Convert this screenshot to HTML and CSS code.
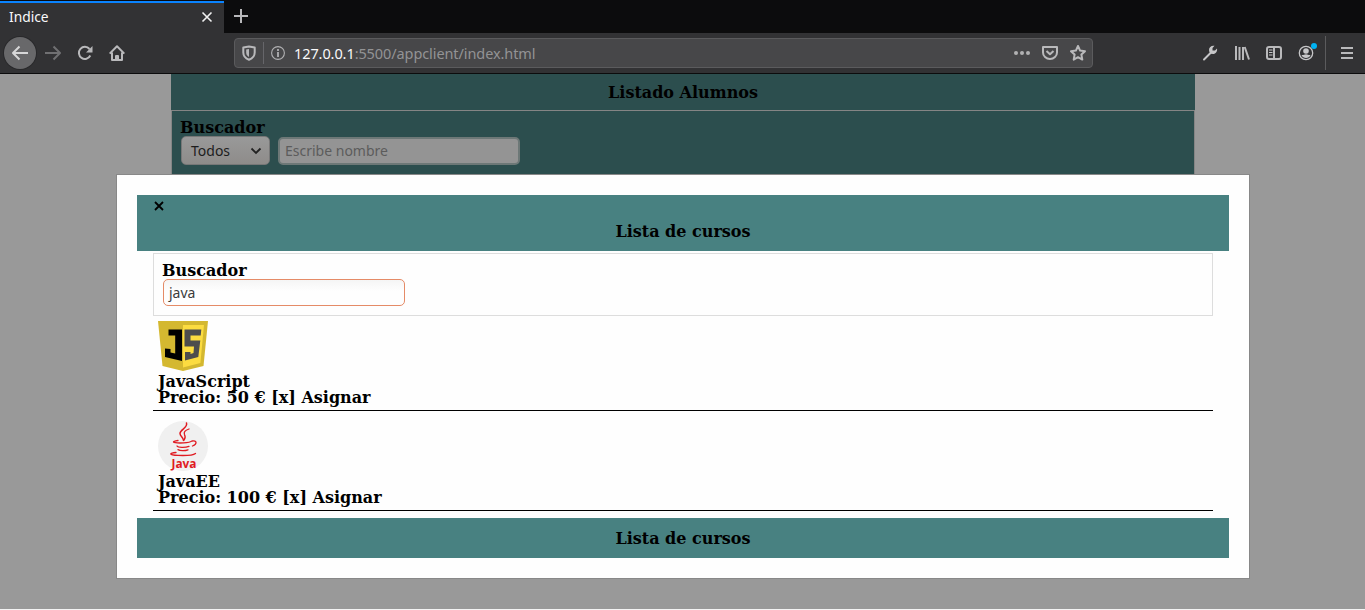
FILE: index.html
```html
<!DOCTYPE html>
<html lang="es">
<head>
<meta charset="utf-8">
<title>Indice</title>
<link rel="stylesheet" href="styles.css">
</head>
<body>
<div class="browser">
  <div class="tabs">
    <div class="tab">
      <span class="tab-title">Indice</span>
      <svg class="tab-close" width="12" height="12" viewBox="0 0 12 12"><path d="M1.500 1.500l9 9M10.500 1.500l-9 9" stroke="#f0f0f0" stroke-width="1.600" fill="none"/></svg>
    </div>
    <svg class="tab-new" width="16" height="16" viewBox="0 0 16 16"><path d="M8 1v14M1 8h14" stroke="#b8b8ba" stroke-width="2"/></svg>
  </div>
  <div class="toolbar">
    <div class="nav">
      <span class="back"><svg width="18" height="16" viewBox="0 0 18 16"><path d="M17 8H2M8.500 1.500L2 8l6.500 6.500" class="line"/></svg></span>
      <svg class="forward" width="16" height="16" viewBox="0 0 16 16"><path d="M0 8h15M8.500 1.500L15 8l-6.500 6.500" class="line"/></svg>
      <svg class="reload" width="16" height="16" viewBox="0 0 16 16"><path d="M13.300 10.500A6 6 0 1 1 12.500 4" class="line"/><path d="M15.500 1v6.500H9z" fill="#b7b7b9"/></svg>
      <svg class="home" width="16" height="16" viewBox="0 0 16 16"><path d="M.7 8.600L8 1.300l7.300 7.300M3 7.500V15h10V7.500" class="line"/><path d="M7 15v-4h2v4" class="line"/></svg>
    </div>
    <div class="urlbar">
      <svg class="shield" width="14" height="16" viewBox="0 0 14 16"><path d="M7 1.500L12.700 2.500v5c0 3.500-2.300 6-5.700 7.300C3.600 13.500 1.300 11 1.300 7.500v-5z" class="line"/><path d="M7 4v8C5 10.800 4.200 9.500 4.200 7.500V4.500z" fill="#b7b7b9"/></svg>
      <span class="url-divider"></span>
      <svg class="info" width="14" height="14" viewBox="0 0 14 14"><circle cx="7" cy="7" r="6.400" fill="none" stroke="#b1b1b3" stroke-width="1.100"/><path d="M7 3v2M7 6v5" stroke="#b1b1b3" stroke-width="1.800"/></svg>
      <span class="url"><b>127.0.0.1</b>:5500/appclient/index.html</span>
      <svg class="dots" width="16" height="6" viewBox="0 0 16 6"><g fill="#b1b1b3"><circle cx="2" cy="3" r="2"/><circle cx="8" cy="3" r="2"/><circle cx="14" cy="3" r="2"/></g></svg>
      <svg class="pocket" width="16" height="14" viewBox="0 0 16 14"><path d="M1 1h14v5.500a7 6.500 0 0 1-14 0z" class="line"/><path d="M4.500 5L8 8.300 11.500 5" class="line"/></svg>
      <svg class="star" width="16" height="16" viewBox="0 0 16 16"><path d="M8 1l2.100 4.600 4.900.6-3.600 3.400.9 5L8 12.200l-4.300 2.400.9-5L1 6.200l4.900-.6z" class="line"/></svg>
    </div>
    <div class="tools">
      <svg width="16" height="16" viewBox="0 0 16 16"><path d="M2 14.500L9 7.500" stroke="#c6c6c8" stroke-width="2" stroke-linecap="round"/><path d="M12.500.8L10.500 3v2.500H13l2-2c.6 2.800-1.200 5.500-4 5.500-2.200 0-4-1.500-4-4 0-2.800 2.500-4.800 5.500-4.200z" fill="#c6c6c8"/></svg>
      <svg width="16" height="16" viewBox="0 0 16 16"><path d="M2 1v14M5.500 2v13M9 2v13M10.700 2l4.300 12.500" class="line"/></svg>
      <svg width="16" height="14" viewBox="0 0 16 14"><rect x="1" y="1" width="14" height="12" rx="2" class="line"/><path d="M8 1v12" class="line"/><path d="M3 4h3.500M3 6.500h3.500M3 9h3.500" stroke="#c6c6c8"/></svg>
      <span class="account">
        <svg width="16" height="16" viewBox="0 0 16 16"><circle cx="8" cy="8" r="6.700" fill="none" stroke="#c6c6c8" stroke-width="1.300"/><circle cx="8" cy="6" r="2.800" fill="#c6c6c8"/><path d="M3.500 10c2 .4 2.500-.8 4.500-.8s2.500 1.200 4.500.8C11.500 12.300 10 13 8 13s-3.500-.7-4.500-3z" fill="#c6c6c8"/></svg>
        <i class="account-dot"></i>
      </span>
      <span class="tools-divider"></span>
      <svg class="menu" width="12" height="12" viewBox="0 0 12 12"><path d="M0 1h12M0 6h12M0 11h12" class="line"/></svg>
    </div>
  </div>
</div>
<main class="page">
  <section class="students">
    <h1 class="title">Listado Alumnos</h1>
    <div class="filters">
      <div class="label">Buscador</div>
      <div class="controls">
        <div class="select"><span>Todos</span><svg width="12" height="8" viewBox="0 0 12 8"><path d="M1.500 1.500L6 6l4.500-4.500" fill="none" stroke="#222" stroke-width="1.800"/></svg></div>
        <div class="input dim">Escribe nombre</div>
      </div>
    </div>
  </section>
  <section class="modal">
    <header class="modal-head">
      <svg class="close" width="10" height="10" viewBox="0 0 10 10"><path d="M1 1l8 8M9 1L1 9" stroke="#000" stroke-width="1.800"/></svg>
      <h2 class="title modal-title">Lista de cursos</h2>
    </header>
    <div class="modal-body">
      <div class="search">
        <div class="label">Buscador</div>
        <div class="input focused">java</div>
      </div>
      <article class="course">
        <svg class="logo" width="50" height="50" viewBox="0 0 50 50"><path d="M0 0h50l-4.500 45L25 50 4.500 45z" fill="#d4b830"/><path d="M25 4h21l-3.600 38L25 46.500z" fill="#fcdc40"/><path d="M10.500 8.500H24V40L7 36v-8.500l5.500.5v3.500l4.700 1V14.500h-6.700z" fill="#000"/><path d="M43.300 8.500l-.6 6H32.500v5h9.800L40.300 36 27 39.500V31h5.500v2l3-.9.5-6.600h-9.500v-17z" fill="#4d4d4d"/></svg>
        <div class="course-line">JavaScript</div>
        <div class="course-line">Precio: 50 € [x] Asignar</div>
      </article>
      <article class="course">
        <svg class="logo" width="50" height="50" viewBox="0 0 50 50"><circle cx="25" cy="25" r="25" fill="#f0f0f0"/><g fill="none" stroke="#e01b22" stroke-linecap="round"><path d="M28.500 2c1.500 5-6.500 6.500-6.500 10.500 0 3 3.500 3.500 3.500 7" stroke-width="1.500"/><path d="M31 8c-4 1.500-5.500 3-4.500 5.500 1 2 1.500 3.200-.5 5.500" stroke-width="1.300"/><path d="M20 19.500c-7 1-5.500 2.300 2 2.500 4 0 8-.2 11-1.500M34 20c5-1 5.500 3 .5 5M19 25c1 1.600 8 1.800 12 .4M20 28.600c2 1.300 7 1.400 10 .2M18 31.500c-7 .5-7.500 2.500 2 2.900 7 .3 15 0 17.500-2" stroke-width="1.300"/></g><text x="26" y="46.500" text-anchor="middle" textLength="25" lengthAdjust="spacingAndGlyphs" class="java-word">Java</text></svg>
        <div class="course-line">JavaEE</div>
        <div class="course-line">Precio: 100 € [x] Asignar</div>
      </article>
    </div>
    <footer class="modal-foot"><h2 class="title modal-title">Lista de cursos</h2></footer>
  </section>
</main>
</body>
</html>
```
FILE: styles.css
```css
* { box-sizing: border-box; }
body { margin: 0; width: 1365px; height: 610px; overflow: hidden; background: #f4f4f4; font: bold 16px/16px "DejaVu Serif", serif; color: #000; }
svg { display: block; flex: none; }
.line { fill: none; stroke: #b9b9bb; stroke-width: 2; stroke-linejoin: round; }
.browser { height: 74px; font: 15px/20px "Noto Sans", sans-serif; background: #323234; border-bottom: 1px solid #0c0c0d; }
.tabs { display: flex; height: 33px; background: #0c0c0d; }
.tab { display: flex; justify-content: space-between; align-items: center; width: 224px; margin-top: 1px; padding: 0 11px 2px 9px; border-top: 2px solid #0a84ff; background: #323234; color: #f9f9fa; font-size: 13.800px; }
.tab-new { margin: 8px 0 0 9px; }
.toolbar { display: flex; height: 40px; align-items: center; }
.nav { display: flex; align-items: center; width: 234px; padding-left: 4px; }
.back { display: flex; align-items: center; justify-content: center; width: 32px; height: 32px; border-radius: 50%; background: #68686a; box-shadow: 0 0 0 1px #29292b; }
.back .line { stroke: #d7d7d8; }
.forward { margin-left: 9px; }
.forward .line { stroke: #707072; }
.reload { margin-left: 16px; }
.home { margin-left: 16px; }
.urlbar { display: flex; align-items: center; width: 859px; height: 30px; padding-left: 7px; border: 1px solid #5b5b5d; border-radius: 4px; background: #474749; }
.url-divider { width: 1px; height: 22px; margin: 0 7px 0 7px; background: #66666a; }
.url { flex: 1; margin-left: 9px; color: #939395; font-size: 14.500px; letter-spacing: -.09px; white-space: nowrap; }
.url b { color: #f9f9fa; font-weight: 400; }
.pocket { margin-left: 12px; }
.star { margin: 0 6px 0 12px; }
.tools { display: flex; align-items: center; gap: 16px; margin-left: 109px; }
.account { position: relative; }
.account-dot { position: absolute; top: -2px; right: -3px; width: 6px; height: 6px; border-radius: 50%; background: #00b3f4; }
.tools-divider { width: 1px; height: 34px; margin-left: -5px; background: #5b5b5d; }
.menu { margin-left: -1px; }
.page { position: relative; height: 535px; background: #999; }
.students { width: 1024px; margin-left: 171px; background: #2c4e4e; }
.title { margin: 0; font-size: 16px; line-height: 16px; text-align: center; }
.students .title { height: 36px; padding-top: 11px; }
.filters { height: 66px; padding: 9px 8px 0; border: 1px solid #858585; }
.label { height: 16px; }
.controls { display: flex; gap: 8px; align-items: flex-start; height: 30px; padding-left: 1px; font: 14px/20px "Noto Sans", sans-serif; }
.select { display: flex; justify-content: space-between; align-items: center; width: 89px; height: 29px; padding: 1px 7px 0 9px; border: 1px solid #777; border-radius: 5px; background: linear-gradient(#999, #8e8c8a); color: #1d1d1d; }
.input { display: flex; align-items: center; width: 242px; height: 27px; padding: 0 5px; border: 1px solid #aaa; border-radius: 5px; font: 14px/20px "Noto Sans", sans-serif; }
.dim { height: 28px; margin-top: 1px; border: 2px solid #6d7877; background: #949494; color: #5c5c5c; }
.modal { position: absolute; left: 116px; top: 100px; width: 1134px; height: 405px; padding: 20px; border: 1px solid #888; background: #fefefe; }
.modal-head { height: 56px; padding: 6px 16px 0; background: #488181; }
.close { margin-left: 1px; }
.modal-head .title { margin-top: 13px; }
.modal-body { height: 267px; padding: 2px 16px 0; }
.search { height: 63px; padding: 9px 8px 0; border: 1px solid #ddd; }
.focused { margin-left: 1px; border-color: #e58b67; background: linear-gradient(#f5f5f5, #fefefe 45%); color: #3b3b3b; }
.course { height: 100px; padding: 10px 5px 0; border-bottom: 1px solid #000; }
.search + .course { height: 95px; padding-top: 5px; }
.logo { margin-bottom: 3px; }
.course-line { height: 16px; white-space: nowrap; }
.java-word { font: bold 12px "Open Sans", sans-serif; fill: #e01b22; }
.modal-foot { height: 40px; padding-top: 13px; background: #488181; }
```
